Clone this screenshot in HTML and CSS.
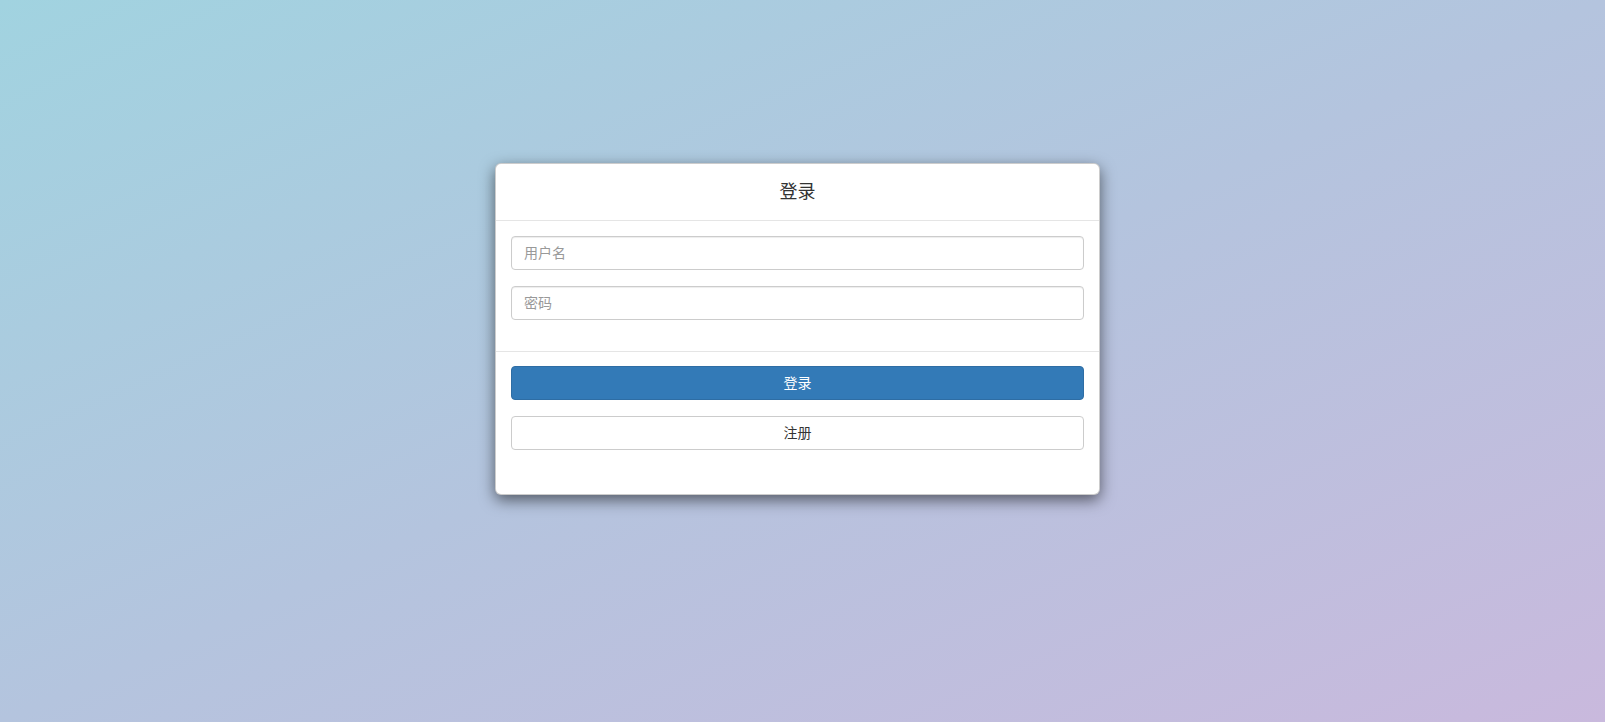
FILE: index.html
```html
<!DOCTYPE html>
<html lang="zh">
<head>
<meta charset="utf-8">
<title>登录</title>
<link rel="stylesheet" href="styles.css">
</head>
<body>
<div class="page">
  <div class="card">
    <div class="card-header">
      <h4 class="card-title">登录</h4>
    </div>
    <div class="card-body">
      <div class="form-group"><input class="form-control" type="text" placeholder="用户名"></div>
      <div class="form-group"><input class="form-control" type="password" placeholder="密码"></div>
    </div>
    <div class="card-footer">
      <button class="btn btn-primary">登录</button>
      <button class="btn btn-default">注册</button>
    </div>
  </div>
</div>
</body>
</html>
```
FILE: styles.css
```css
* { box-sizing: border-box; }
html, body { margin: 0; height: 100%; }
body {
  font-family: "Liberation Sans", "Noto Sans CJK SC", sans-serif;
  font-size: 14px;
  color: #333;
  background: linear-gradient(to bottom right, #a1d3e0 0%, #b4c4de 50%, #c9b9dd 100%);
  background-attachment: fixed;
}
.page {
  display: flex;
  justify-content: center;
  padding: 163px 10px 0 0;
}
.card {
  width: 605px;
  background: #fff;
  border: 1px solid rgba(0,0,0,.2);
  border-radius: 6px;
  box-shadow: 0 5px 15px rgba(0,0,0,.55);
}
.card-header {
  padding: 15px;
  border-bottom: 1px solid #e5e5e5;
  text-align: center;
}
.card-title {
  margin: 0;
  font-size: 18px;
  font-weight: 400;
  line-height: 26px;
  color: #333;
}
.card-body {
  padding: 15px 15px 15px;
}
.form-group { margin-bottom: 16px; }
.form-control {
  display: block;
  width: 100%;
  height: 34px;
  padding: 6px 12px;
  font: inherit;
  font-size: 14px;
  color: #555;
  background: #fff;
  border: 1px solid #ccc;
  border-radius: 4px;
  box-shadow: inset 0 1px 1px rgba(0,0,0,.075);
  outline: none;
}
.form-control::placeholder { color: #999; }
.card-footer {
  border-top: 1px solid #e5e5e5;
  padding: 14px 15px 44px;
  display: flex;
  flex-direction: column;
  gap: 16px;
}
.btn {
  display: block;
  width: 100%;
  height: 34px;
  padding: 6px 12px;
  font: inherit;
  font-size: 14px;
  line-height: 20px;
  border: 1px solid transparent;
  border-radius: 4px;
  cursor: pointer;
}
.btn-primary {
  color: #fff;
  background: #337ab7;
  border-color: #2e6da4;
}
.btn-default {
  color: #333;
  background: #fff;
  border-color: #ccc;
}
```
